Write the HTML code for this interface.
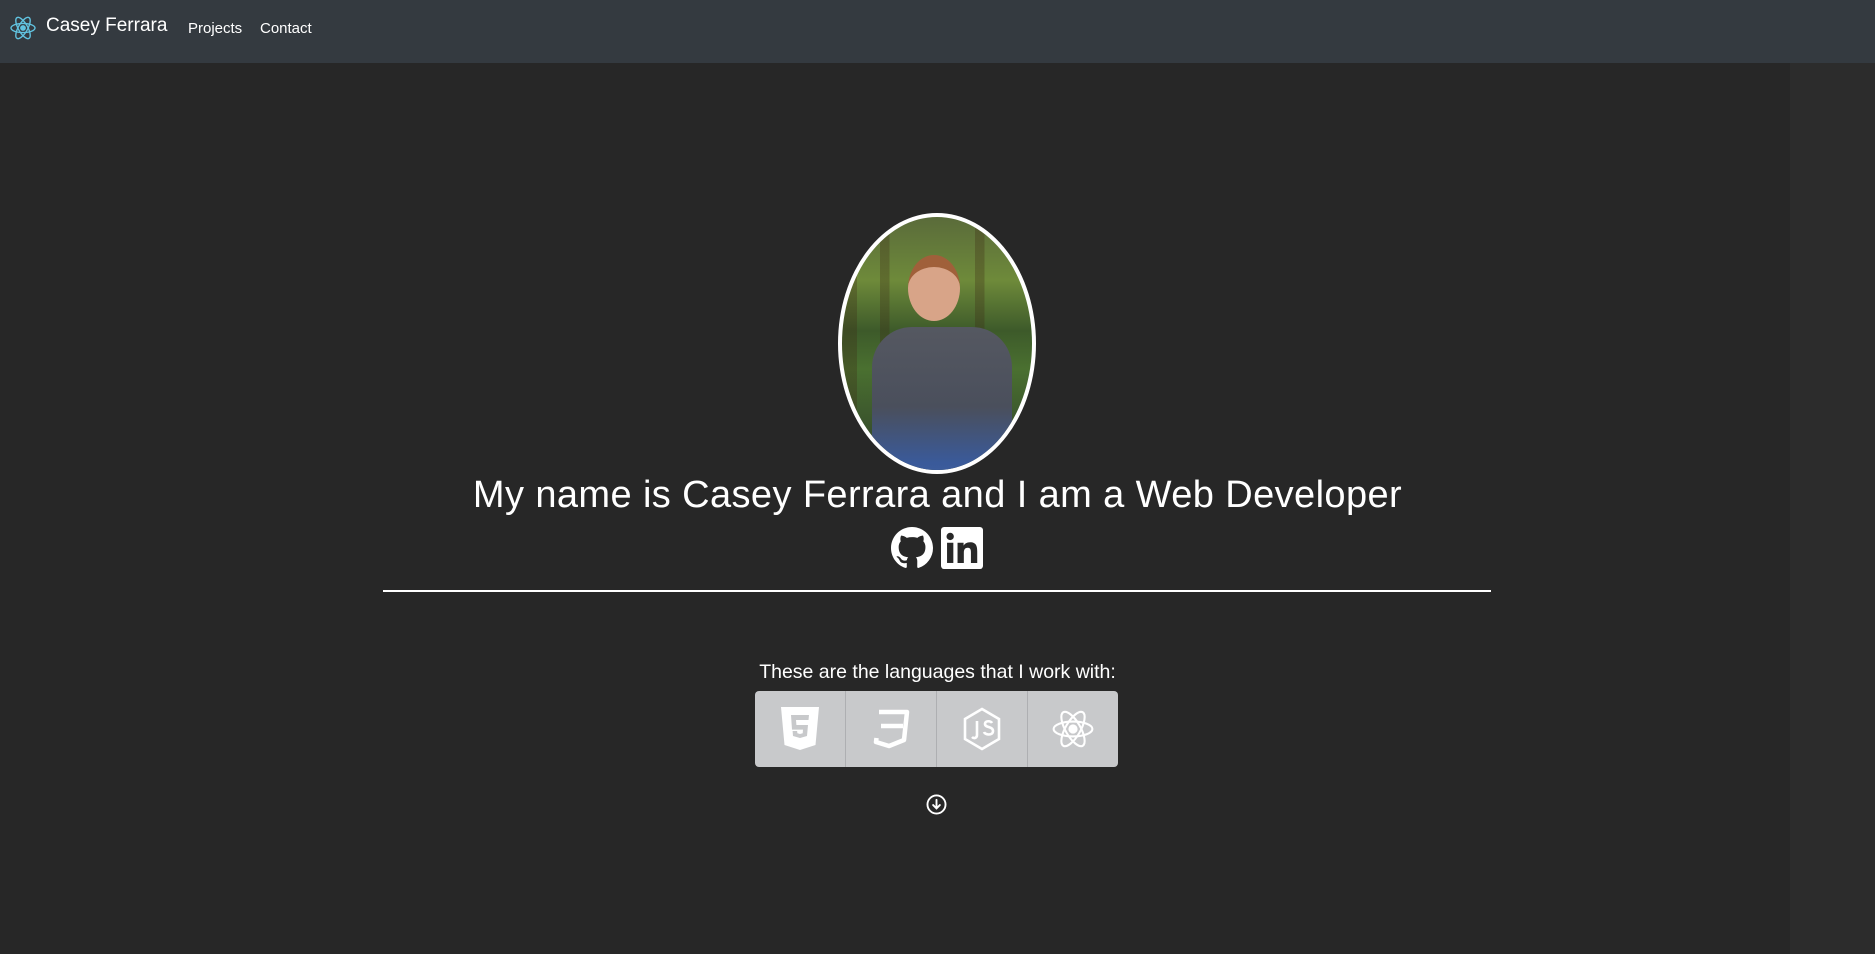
<!DOCTYPE html>
<html><head><meta charset="utf-8"><style>
*{margin:0;padding:0;box-sizing:border-box}
body{width:1875px;height:954px;background:#272727;font-family:"Liberation Sans",sans-serif;color:#fff;position:relative;overflow:hidden}
.strip{position:absolute;left:1790px;top:63px;width:85px;height:891px;background:#2c2c2c}
nav{position:absolute;left:0;top:0;width:1875px;height:63px;background:#343a40;z-index:2}
.brand{position:absolute;left:46px;top:15px;font-size:19px;color:#fff}
.nl{position:absolute;top:20px;font-size:15px;color:#fff}
.photo{position:absolute;left:838px;top:213px;width:198px;height:261px;border:4px solid #fff;border-radius:50%;overflow:hidden;
background:linear-gradient(90deg,rgba(60,40,20,.3) 0 8%,transparent 8% 20%,rgba(60,40,20,.3) 20% 25%,transparent 25% 70%,rgba(60,40,20,.3) 70% 75%,transparent 75%),linear-gradient(180deg,#5a6b3a 0%,#6e8a3a 25%,#3d5a2a 45%,#4a7030 60%,#2e3e2a 100%)}
.shirt{position:absolute;left:30px;top:110px;width:140px;height:160px;border-radius:40px 40px 0 0;background:linear-gradient(180deg,#555861 0%,#4a4f5c 50%,#3a5a9a 85%,#4060a0 100%)}
.head{position:absolute;left:66px;top:38px;width:52px;height:66px;border-radius:50%;background:#d8a488;border-top:12px solid #a0603a}
h1{position:absolute;left:0;width:1875px;top:474px;text-align:center;font-weight:normal;font-size:38px;letter-spacing:0.4px}
hr{position:absolute;left:383px;top:590px;width:1108px;border:0;height:2px;background:#fff}
.lang{position:absolute;left:0;width:1875px;top:661px;text-align:center;font-size:19.5px}
.bg{position:absolute;left:755px;top:691px;width:363px;height:76px;background:#c8c9cb;border-radius:4px;display:flex}
.bg div{flex:1;border-right:1px solid #aeafb2;display:flex;align-items:center;justify-content:center}
.bg div:last-child{border-right:0}
</style></head><body>
<div class="strip"></div>
<nav>
<svg style="position:absolute;left:10px;top:15px" width="26" height="26" viewBox="-13 -13 26 26" fill="none" stroke="#61c3e0" stroke-width="1.4"><ellipse rx="12" ry="4.6"/><ellipse rx="12" ry="4.6" transform="rotate(60)"/><ellipse rx="12" ry="4.6" transform="rotate(120)"/><circle r="2.2" fill="#61c3e0"/></svg>
<div class="brand">Casey Ferrara</div>
<div class="nl" style="left:188px">Projects</div>
<div class="nl" style="left:260px">Contact</div>
</nav>
<div class="photo"><div class="shirt"></div><div class="head"></div></div>
<h1>My name is Casey Ferrara and I am a Web Developer</h1>
<svg style="position:absolute;left:891px;top:527px" width="42" height="42" viewBox="0 0 16 16" fill="#fff"><path d="M8 0C3.58 0 0 3.58 0 8c0 3.540 2.29 6.53 5.47 7.59.4.07.55-.17.55-.38 0-.19-.01-.82-.01-1.49-2.01.37-2.53-.49-2.690-.94-.09-.23-.48-.94-.82-1.13-.28-.15-.68-.52-.01-.53.63-.01 1.08.58 1.23.82.72 1.21 1.87.87 2.33.66.07-.52.28-.87.51-1.070-1.78-.2-3.64-.89-3.64-3.95 0-.87.31-1.59.82-2.15-.08-.2-.36-1.02.08-2.12 0 0 .67-.21 2.2.82.64-.18 1.32-.27 2-.27.68 0 1.36.09 2 .27 1.53-1.04 2.2-.82 2.2-.82.44 1.1.16 1.92.08 2.12.51.56.82 1.27.82 2.15 0 3.07-1.87 3.75-3.65 3.95.29.25.54.73.54 1.48 0 1.07-.01 1.93-.01 2.2 0 .21.15.46.55.38A8.013 8.013 0 0016 8c0-4.42-3.58-8-8-8z"/></svg>
<svg style="position:absolute;left:941px;top:527px" width="42" height="42" viewBox="0 0 16 16"><rect width="16" height="16" rx="1.2" fill="#fff"/><rect x="2.3" y="6" width="2.4" height="7.7" fill="#282828"/><circle cx="3.5" cy="3.6" r="1.4" fill="#282828"/><path d="M6.3 6h2.3v1.1c.4-.7 1.2-1.3 2.5-1.3 2.3 0 2.7 1.5 2.7 3.5v4.4h-2.4V9.9c0-.9 0-2-1.2-2s-1.5.9-1.5 1.9v3.9H6.3z" fill="#282828"/></svg>
<hr>
<div class="lang">These are the languages that I work with:</div>
<div class="bg">
<div><svg width="38" height="44" viewBox="0 0 38 44"><path d="M0 0h38l-3.5 38L19 43 3.5 38z" fill="#fff"/><path d="M10 8h18l-.5 5H15l.4 5h11.6l-1 11L19 31l-7-2-.4-5h4.5l.3 2.3L19 27l2.7-.7.3-3.7H11z" fill="#c8c9cb"/></svg></div>
<div><svg width="40" height="42" viewBox="0 0 40 42" fill="none" stroke="#fff" stroke-width="4.5" stroke-linejoin="round"><path d="M8 4h28l-3 28-15 6-13-4 .5-4"/><path d="M10 18h22"/></svg></div>
<div><svg width="40" height="44" viewBox="0 0 40 44" fill="none" stroke="#fff" stroke-width="2.6"><path d="M20 2l17 10v20L20 42 3 32V12z"/><path d="M15 14v14c0 3-3 4-5 2"/><path d="M30 16c-1-2-7-3-7 1s8 2 8 7-8 4-9 1"/></svg></div>
<div><svg width="42" height="42" viewBox="-13 -13 26 26" fill="none" stroke="#fff" stroke-width="1.3"><ellipse rx="12" ry="4.6"/><ellipse rx="12" ry="4.6" transform="rotate(60)"/><ellipse rx="12" ry="4.6" transform="rotate(120)"/><circle r="2.2" fill="#fff"/></svg></div>
</div>
<svg style="position:absolute;left:926px;top:794px" width="21" height="21" viewBox="0 0 20 20" fill="none" stroke="#fff" stroke-width="1.8"><circle cx="10" cy="10" r="8.6"/><path d="M10 5.5v8M6.8 10.5L10 13.7l3.2-3.2" stroke-linecap="round"/></svg>
</body></html>
